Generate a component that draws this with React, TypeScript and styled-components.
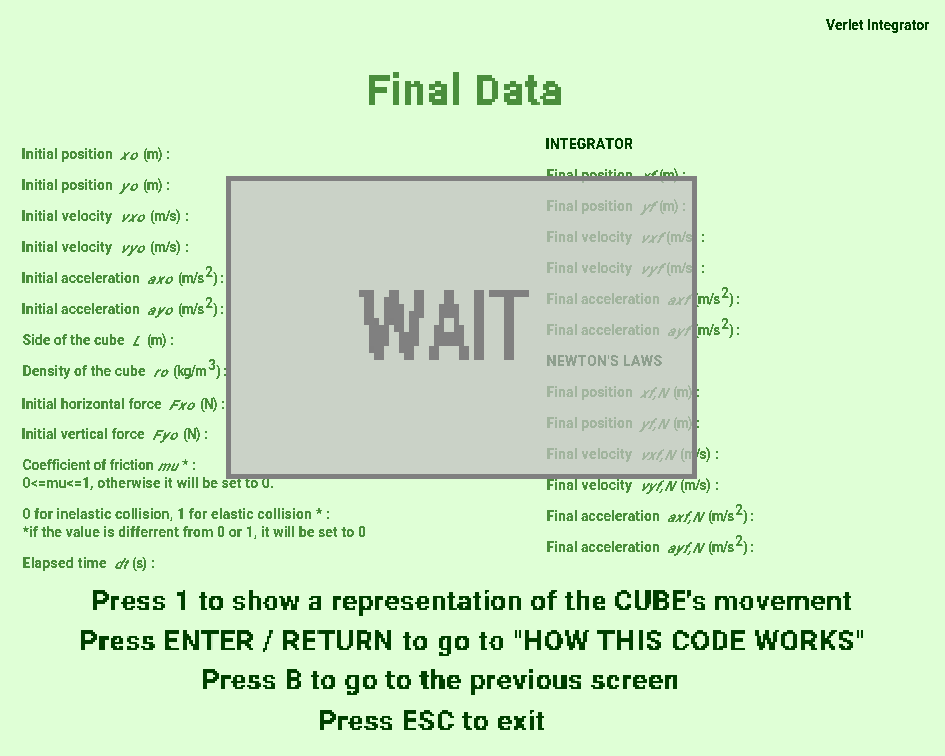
import React, { useLayoutEffect, useRef, useState } from 'react';
import styled, { createGlobalStyle, css } from 'styled-components';

const GlobalStyle = createGlobalStyle`
  html, body { margin: 0; padding: 0; background: #dfffd6; overflow: hidden; }
`;

const GREEN = '#4a8e3c';
const DARK = '#004000';

const Screen = styled.main`
  position: relative;
  width: 945px;
  height: 756px;
  overflow: hidden;
  display: flex;
  flex-direction: column;
  background: #dfffd6;
  color: ${GREEN};
  font: 700 14px/1 Roboto, 'Liberation Sans', sans-serif;
`;

const FilterDefs = styled.svg`
  position: absolute;
  width: 0;
  height: 0;
`;

const TopBar = styled.header`
  display: flex;
  justify-content: flex-end;
  height: 51px;
  padding-right: 16px;
  line-height: 51px;
  color: ${DARK};
  filter: url(#crisp);
`;

const Title = styled.h1`
  margin: 0;
  height: 78px;
  padding-left: 369px;
  font-size: 42px;
  font-weight: 700;
  line-height: 80px;
  filter: url(#mosaic3);
`;

const Columns = styled.div`
  display: grid;
  grid-template-columns: 524px 1fr;
  height: 452px;
  padding-left: 22px;
  filter: url(#crisp);
`;

const Column = styled.section<{ $top: number }>`
  padding-top: ${(p) => p.$top}px;
`;

const Row = styled.div<{ $height?: number; $dark?: boolean }>`
  display: flex;
  height: ${(p) => p.$height ?? 31}px;
  line-height: 20px;
  white-space: nowrap;
  ${(p) => p.$dark && `color: ${DARK};`}
`;

type Kind = 'text' | 'unit' | 'symbol' | 'sup';

const Piece = styled.span<{ $width: number; $gap: number; $kind: Kind }>`
  flex: none;
  display: block;
  width: ${(p) => p.$width}px;
  margin-left: ${(p) => p.$gap}px;
  white-space: pre;
  font-kerning: none;
  ${(p) =>
    p.$kind === 'unit' &&
    css`
      word-spacing: 2.5px;
    `}
  ${(p) =>
    p.$kind === 'symbol' &&
    css`
      font-style: italic;
      font-weight: 700;
      font-size: 14px;
      transform: translateY(1px) skewX(-20deg);
    `}
  ${(p) =>
    p.$kind === 'sup' &&
    css`
      font-weight: 500;
      transform: translateY(-6px);
    `}
`;

const Instructions = styled.footer`
  display: flex;
  flex-direction: column;
  padding-top: 1px;
  color: ${DARK};
  font-size: 28px;
  line-height: 40px;
`;

const Instruction = styled.div<{ $indent: number; $height: number }>`
  height: ${(p) => p.$height}px;
  margin-left: ${(p) => p.$indent}px;
  filter: url(#mosaic2);
`;

const WaitDialog = styled.div`
  position: absolute;
  left: 226px;
  top: 176px;
  box-sizing: border-box;
  width: 471px;
  height: 303px;
  border: 5px solid #808080;
  background: rgba(194, 193, 194, 0.735);
  background-clip: padding-box;
`;

const WaitText = styled.div`
  display: flex;
  height: 100px;
  margin: 95px 0 0 128px;
  width: 180px;
  color: #808080;
  font-size: 98.5px;
  line-height: 100px;
  filter: url(#mosaicTall);
`;

const TallLetter = styled.span<{ $width: number; $scale: number; $gap: number }>`
  flex: none;
  width: ${(p) => p.$width}px;
  margin-left: ${(p) => p.$gap}px;
  transform: scaleX(${(p) => p.$scale});
  transform-origin: left;
`;

/** Spaces the letters so that the ink of the text fills the given width. */
function Fitted({ text, width, gap = 0, kind = 'text' }: { text: string; width: number; gap?: number; kind?: Kind }) {
  const ref = useRef<HTMLSpanElement>(null);
  const [fit, setFit] = useState({ letterSpacing: 0, textIndent: 0 });
  useLayoutEffect(() => {
    const ctx = document.createElement('canvas').getContext('2d');
    if (!ref.current || !ctx) return;
    const style = getComputedStyle(ref.current);
    ctx.font = `${style.fontStyle} ${style.fontWeight} ${style.fontSize} ${style.fontFamily}`;
    ctx.fontKerning = 'none';
    const m = ctx.measureText(text);
    const spaces = (text.split(' ').length - 1) * (parseFloat(style.wordSpacing) || 0);
    const ink = m.actualBoundingBoxLeft + m.actualBoundingBoxRight + spaces;
    setFit({
      letterSpacing: text.length > 1 ? (width - ink) / (text.length - 1) : 0,
      textIndent: m.actualBoundingBoxLeft,
    });
  }, [text, width]);
  return (
    <Piece ref={ref} $width={width} $gap={gap} $kind={kind} style={fit}>
      {text}
    </Piece>
  );
}

type Part = [text: string, start: number, end: number, kind?: Kind];
interface Line {
  parts: Part[];
  height?: number;
  dark?: boolean;
}

const name = (text: string, end: number): Part => [text, 0.5, end];
const sym = (text: string, start: number, end: number): Part => [text, start, end, 'symbol'];
const unit = (text: string, start: number, end: number): Part => [text, start, end, 'unit'];
const squared = (start: number, base = '(m/s', power = '2', baseWidth = 26): Part[] => [
  [base, start, start + baseWidth],
  [power, start + baseWidth + 1, start + baseWidth + 8, 'sup'],
  [') :', start + baseWidth + 9, start + baseWidth + 20, 'unit'],
];

const initialData: Line[] = [
  { parts: [name('Initial position', 91), sym('xo', 97, 115), unit('(m) :', 121, 148)] },
  { parts: [name('Initial position', 91), sym('yo', 97, 115), unit('(m) :', 121, 148)] },
  { parts: [name('Initial velocity', 91), sym('vxo', 98, 122), unit('(m/s) :', 128, 167)] },
  { parts: [name('Initial velocity', 91), sym('vyo', 98, 122), unit('(m/s) :', 128, 167)] },
  { parts: [name('Initial acceleration', 118), sym('axo', 125, 150), ...squared(156)] },
  { parts: [name('Initial acceleration', 118), sym('ayo', 125, 150), ...squared(156)] },
  { parts: [name('Side of the cube', 103), sym('L', 110, 117), unit('(m) :', 125, 152)] },
  { parts: [name('Density of the cube', 124), sym('ro', 131, 145), ...squared(151, '(kg/m', '3', 34)], height: 33 },
  { parts: [name('Initial horizontal force', 140), sym('Fxo', 147, 172), unit('(N) :', 178, 203)], height: 30 },
  { parts: [name('Initial vertical force', 123), sym('Fyo', 130, 155), unit('(N) :', 161, 186)] },
  { parts: [name('Coefficient of friction', 131), sym('mu', 138, 158), unit('* :', 160, 174)], height: 18 },
  { parts: [name('0<=mu<=1, otherwise it will be set to 0.', 252)] },
  { parts: [name('0 for inelastic collision, 1 for elastic collision * :', 308)], height: 18 },
  { parts: [name('*if the value is differrent from 0 or 1, it will be set to 0', 344)] },
  { parts: [name('Elapsed time', 85), sym('dt', 92, 105), unit('(s) :', 110, 133)] },
];

const finalData: Line[] = [
  { parts: [name('INTEGRATOR', 87)], dark: true },
  { parts: [name('Final position', 87), sym('xf', 94, 108), unit('(m) :', 113, 140)] },
  { parts: [name('Final position', 87), sym('yf', 94, 108), unit('(m) :', 113, 140)] },
  { parts: [name('Final velocity', 87), sym('vxf', 94, 116), unit('(m/s) :', 120, 159)] },
  { parts: [name('Final velocity', 87), sym('vyf', 94, 116), unit('(m/s) :', 120, 159)] },
  { parts: [name('Final acceleration', 114), sym('axf', 121, 143), ...squared(148)] },
  { parts: [name('Final acceleration', 114), sym('ayf', 121, 143), ...squared(148)] },
  { parts: [name("NEWTON'S LAWS", 116.5)], dark: true },
  { parts: [name('Final position', 87), sym('xf,N', 93, 121), unit('(m) :', 127, 154)] },
  { parts: [name('Final position', 87), sym('yf,N', 93, 121), unit('(m) :', 127, 154)] },
  { parts: [name('Final velocity', 87), sym('vxf,N', 94, 128), unit('(m/s) :', 134, 173)] },
  { parts: [name('Final velocity', 87), sym('vyf,N', 94, 128), unit('(m/s) :', 134, 173)] },
  { parts: [name('Final acceleration', 114), sym('axf,N', 121, 156), ...squared(162)] },
  { parts: [name('Final acceleration', 114), sym('ayf,N', 121, 156), ...squared(162)] },
];

const instructions = [
  { text: "Press 1 to show a representation of the CUBE's movement", indent: 92, width: 759, height: 40 },
  { text: 'Press ENTER / RETURN to go to "HOW THIS CODE WORKS"', indent: 80, width: 784, height: 39 },
  { text: 'Press B to go to the previous screen', indent: 202, width: 476, height: 41 },
  { text: 'Press ESC to exit', indent: 319, width: 225, height: 34 },
];

const DataLine = ({ line }: { line: Line }) => (
  <Row $height={line.height} $dark={line.dark}>
    {line.parts.map(([text, start, end, kind], i) => (
      <Fitted key={i} text={text} width={end - start} gap={start - (i ? line.parts[i - 1][2] : 0)} kind={kind} />
    ))}
  </Row>
);

const Threshold = () => (
  <feComponentTransfer result="solid">
    <feFuncA type="linear" slope="40" intercept="-17" />
  </feComponentTransfer>
);

const region = { filterUnits: 'userSpaceOnUse', x: 0, y: 0, width: 945, height: 756, colorInterpolationFilters: 'sRGB' } as const;

const Mosaic = ({ id, w, h, children }: { id: string; w: number; h: number; children: React.ReactNode }) => (
  <filter id={id} {...region}>
    <Threshold />
    <feFlood x={w >> 1} y={h >> 1} width="1" height="1" floodColor="#000" />
    <feComposite operator="over" in2="none" x="0" y="0" width={w} height={h} />
    <feTile x="0" y="0" width="945" height="756" result="grid" />
    <feComposite in="solid" in2="grid" operator="in" x="0" y="0" width="945" height="756" result="dots" />
    {children}
  </filter>
);

const Filters = () => (
  <FilterDefs aria-hidden="true">
    <filter id="crisp" {...region}>
      <Threshold />
    </filter>
    <Mosaic id="mosaic3" w={3} h={3}>
      <feMorphology in="dots" operator="dilate" radius="1" />
    </Mosaic>
    <Mosaic id="mosaicTall" w={5} h={7}>
      <feMorphology in="dots" operator="dilate" radius="2 3" />
    </Mosaic>
    <Mosaic id="mosaic2" w={2} h={2}>
      <feOffset in="dots" dx="1" dy="0" result="side" />
      <feMerge result="pair">
        <feMergeNode in="dots" />
        <feMergeNode in="side" />
      </feMerge>
      <feOffset in="pair" dx="0" dy="-1" result="up" />
      <feMerge>
        <feMergeNode in="pair" />
        <feMergeNode in="up" />
      </feMerge>
    </Mosaic>
  </FilterDefs>
);

export default function App() {
  return (
    <Screen>
      <GlobalStyle />
      <Filters />
      <TopBar>
        <Fitted text="Verlet Integrator" width={103} />
      </TopBar>
      <Title>
        <Fitted text="Final Data" width={193} />
      </Title>
      <Columns>
        <Column $top={15}>
          {initialData.map((line, i) => (
            <DataLine key={i} line={line} />
          ))}
        </Column>
        <Column $top={5}>
          {finalData.map((line, i) => (
            <DataLine key={i} line={line} />
          ))}
        </Column>
      </Columns>
      <Instructions>
        {instructions.map(({ text, indent, width, height }) => (
          <Instruction key={text} $indent={indent} $height={height}>
            <Fitted text={text} width={width} />
          </Instruction>
        ))}
      </Instructions>
      <WaitDialog>
        <WaitText>
          <TallLetter $width={70} $scale={0.8} $gap={0}>W</TallLetter>
          <TallLetter $width={40} $scale={0.61} $gap={0}>A</TallLetter>
          <TallLetter $width={10} $scale={0.58} $gap={2}>I</TallLetter>
          <TallLetter $width={40} $scale={0.66} $gap={7}>T</TallLetter>
        </WaitText>
      </WaitDialog>
    </Screen>
  );
}
